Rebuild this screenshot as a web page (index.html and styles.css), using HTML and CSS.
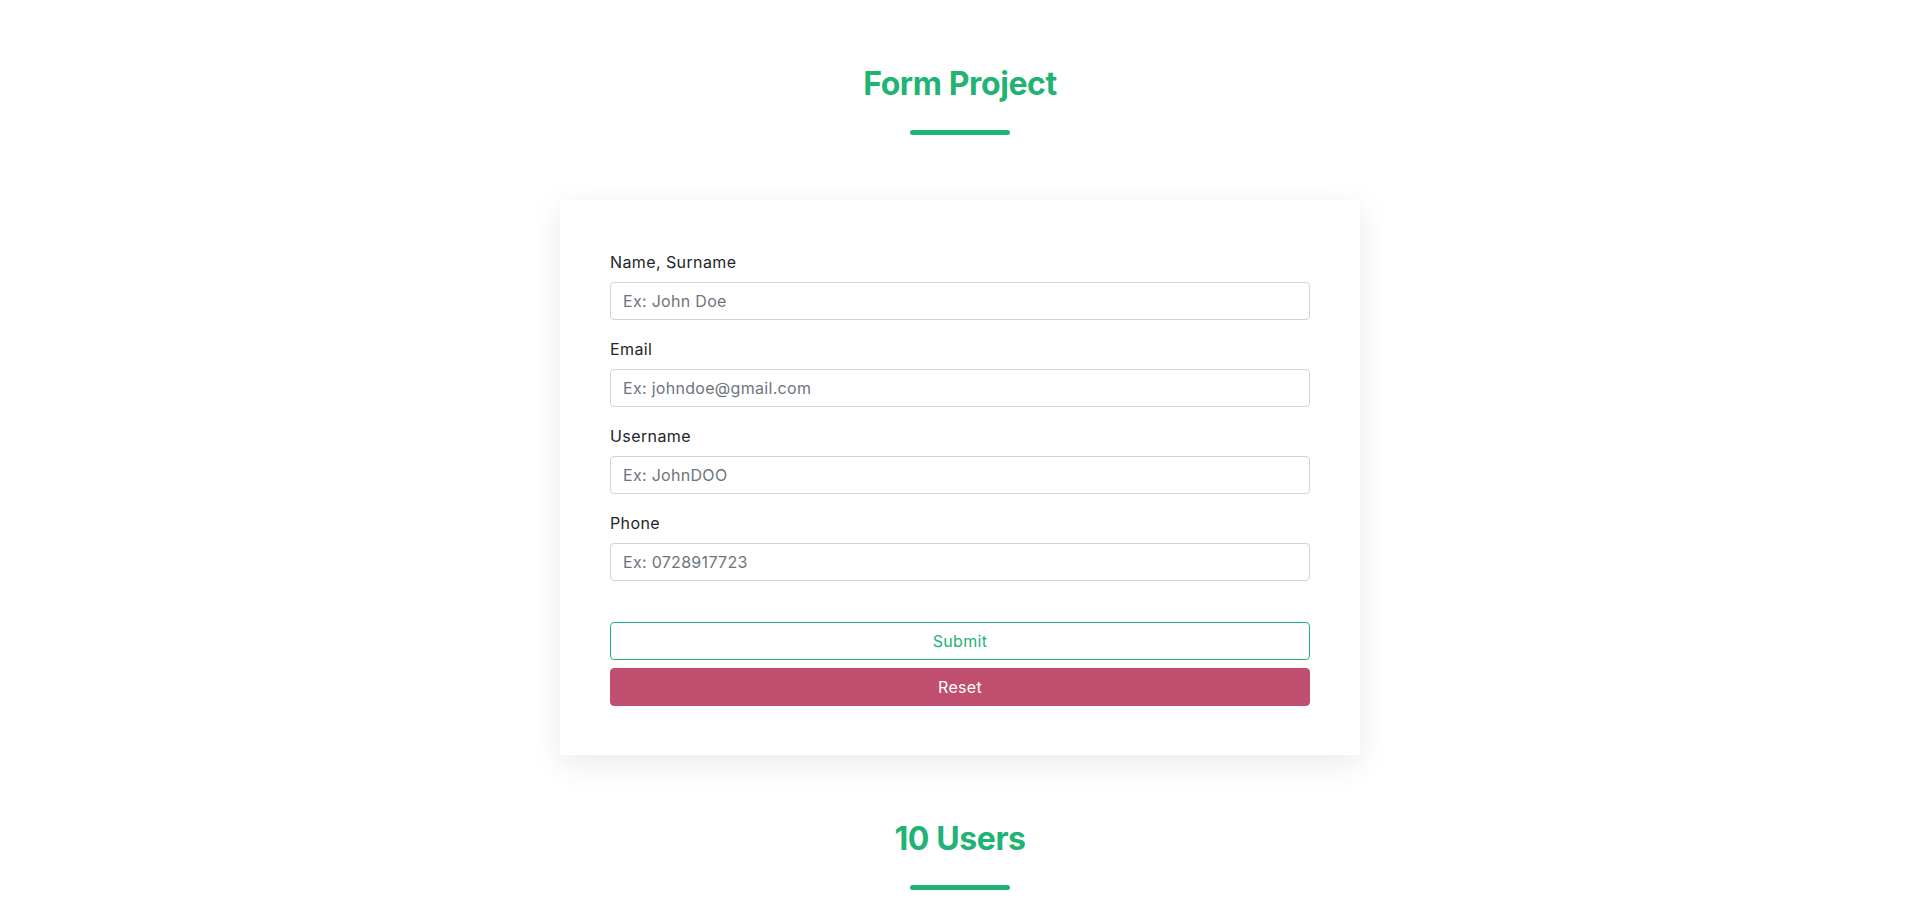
FILE: index.html
```html
<!DOCTYPE html>
<html lang="en">
<head>
<meta charset="utf-8">
<title>Form Project</title>
<link rel="stylesheet" href="styles.css">
</head>
<body>
  <header class="section-head">
    <h2 class="section-title">Form Project</h2>
    <div class="section-line"></div>
  </header>

  <main class="card">
    <form class="form">
      <div class="field">
        <label class="field-label" for="name">Name, Surname</label>
        <input class="field-input" id="name" type="text" placeholder="Ex: John Doe">
      </div>
      <div class="field">
        <label class="field-label" for="email">Email</label>
        <input class="field-input" id="email" type="email" placeholder="Ex: johndoe@gmail.com">
      </div>
      <div class="field">
        <label class="field-label" for="username">Username</label>
        <input class="field-input" id="username" type="text" placeholder="Ex: JohnDOO">
      </div>
      <div class="field">
        <label class="field-label" for="phone">Phone</label>
        <input class="field-input" id="phone" type="text" placeholder="Ex: 0728917723">
      </div>
      <div class="actions">
        <button class="btn btn-submit" type="button">Submit</button>
        <button class="btn btn-reset" type="button">Reset</button>
      </div>
    </form>
  </main>

  <section class="section-head users-head">
    <h2 class="section-title">10 Users</h2>
    <div class="section-line"></div>
  </section>
</body>
</html>
```

FILE: styles.css
```css
* {
  box-sizing: border-box;
}

html, body {
  margin: 0;
  padding: 0;
  background: #ffffff;
}

body {
  font-family: Inter, "Noto Sans", "DejaVu Sans", sans-serif;
  font-size: 16px;
  color: #212529;
  padding-bottom: 60px;
}

.section-head {
  display: flex;
  flex-direction: column;
  align-items: center;
  padding-top: 64px;
}

.section-title {
  margin: 0;
  font-size: 32px;
  line-height: 40px;
  font-weight: 700;
  color: #1fb374;
  letter-spacing: -0.4px;
}

.section-line {
  width: 100px;
  height: 5px;
  border-radius: 3px;
  background: #1fb374;
  margin-top: 26px;
}

.card {
  width: 800px;
  margin: 65px auto 0;
  padding: 50px 50px 49px;
  background: #ffffff;
  box-shadow: 0 8px 30px rgba(0, 0, 0, 0.09);
}

.form {
  display: flex;
  flex-direction: column;
}

.field {
  display: flex;
  flex-direction: column;
  margin-bottom: 17px;
}

.field-label {
  font-size: 16px;
  line-height: 24px;
  margin-bottom: 8px;
  color: #212529;
  letter-spacing: 0.4px;
}

.field-input {
  height: 38px;
  padding: 6px 12px;
  font-family: inherit;
  font-size: 16px;
  line-height: 24px;
  color: #212529;
  border: 1px solid #ced4da;
  border-radius: 4px;
  background: #fff;
  outline: none;
  letter-spacing: 0.3px;
}

.field-input::placeholder {
  color: #6c757d;
  opacity: 1;
}

.actions {
  display: flex;
  flex-direction: column;
  gap: 8px;
  margin-top: 24px;
}

.btn {
  height: 38px;
  width: 100%;
  font-family: inherit;
  font-size: 16px;
  line-height: 24px;
  border-radius: 4px;
  cursor: pointer;
  letter-spacing: 0.3px;
}

.btn-submit {
  background: #ffffff;
  color: #1fb374;
  border: 1px solid #1fb374;
}

.btn-reset {
  background: #c04e6e;
  color: #ffffff;
  border: 1px solid #c04e6e;
}
```
